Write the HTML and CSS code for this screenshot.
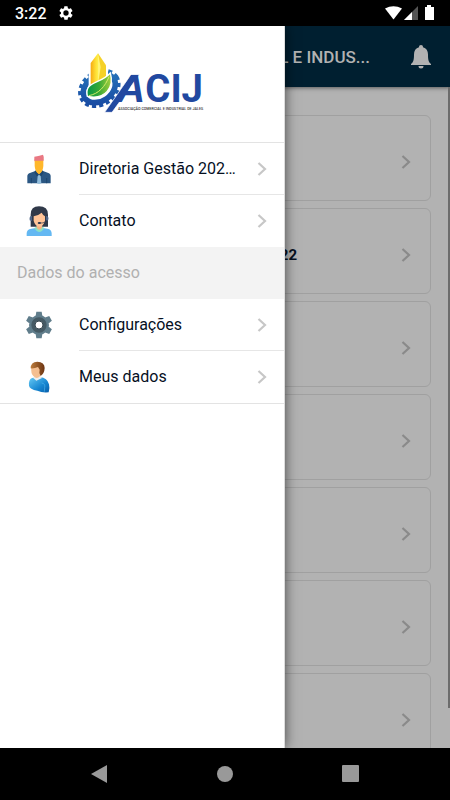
FILE: index.html
```html
<!DOCTYPE html>
<html lang="pt-BR">
<head>
<meta charset="utf-8">
<meta name="viewport" content="width=device-width, initial-scale=1">
<title>ACIJ</title>
<link rel="stylesheet" href="styles.css">
</head>
<body>
<svg width="0" height="0" class="defs" aria-hidden="true">
  <symbol id="chevron" viewBox="0 0 10 14"><path d="M1.500 1 8 7 1.500 13" fill="none" stroke="currentColor" stroke-width="2.200"/></symbol>
</svg>
<div class="status">
  <span class="clock">3:22</span>
  <svg class="status-gear" width="16" height="16" viewBox="0 0 24 24"><path fill="#fff" fill-rule="evenodd" d="M19.4 13a7 7 0 0 0 0-2l2.1-1.7a.5.5 0 0 0 .1-.6l-2-3.5a.5.5 0 0 0-.6-.2l-2.5 1a7 7 0 0 0-1.7-1l-.4-2.600a.5.5 0 0 0-.5-.4h-4a.5.5 0 0 0-.5.4L9.100 5a8 8 0 0 0-1.700 1l-2.500-1a.5.5 0 0 0-.6.2l-2 3.500a.5.5 0 0 0 .1.6L4.500 11a8 8 0 0 0 0 2l-2.100 1.700a.5.5 0 0 0-.1.600l2 3.500c.1.200.4.300.6.200l2.500-1a7 7 0 0 0 1.700 1l.4 2.600c0 .200.200.400.500.400h4c.300 0 .500-.200.500-.400l.4-2.600a7 7 0 0 0 1.700-1l2.500 1c.200.100.500 0 .600-.200l2-3.500a.5.5 0 0 0-.1-.600ZM12 8a4 4 0 1 1 0 8 4 4 0 0 1 0-8Z"/></svg>
  <svg class="signals" width="52" height="16" viewBox="0 0 52 16">
    <path d="M1 3.500Q9.500-1 18 3.500L9.500 14.500Z" fill="#fff"/>
    <path d="M34 1v14H20Z" fill="#555"/><path d="M28 7v8h-8Z" fill="#fff"/>
    <path d="M43 0h4v2h3v13h-9V2h2Z" fill="#fff"/>
  </svg>
</div>

<div class="stage">
  <div class="page">
    <header class="topbar">
      <h1>L E INDUS...</h1>
      <button class="bell" aria-label="Notificações">
        <svg width="20" height="24" viewBox="0 0 20 24"><path fill="#b2b2b2" d="M10 0c1.300 0 2 .9 2 2.200 3.300.9 5 3.500 5 7.300 0 5 .5 7.500 3 9.500v1H0v-1c2.500-2 3-4.500 3-9.500 0-3.800 1.700-6.400 5-7.300C8 .9 8.700 0 10 0ZM7.500 21h5a2.500 2.500 0 0 1-5 0Z"/></svg>
      </button>
    </header>
    <main class="cards">
      <a class="card" href="#"><svg class="chev"><use href="#chevron"/></svg></a>
      <a class="card" href="#"><b>22</b><svg class="chev"><use href="#chevron"/></svg></a>
      <a class="card" href="#"><svg class="chev"><use href="#chevron"/></svg></a>
      <a class="card" href="#"><svg class="chev"><use href="#chevron"/></svg></a>
      <a class="card" href="#"><svg class="chev"><use href="#chevron"/></svg></a>
      <a class="card" href="#"><svg class="chev"><use href="#chevron"/></svg></a>
      <a class="card" href="#"><svg class="chev"><use href="#chevron"/></svg></a>
    </main>
    <div class="scroll"></div>
  </div>

  <aside class="drawer">
    <div class="brand">
      <svg width="150" height="76" viewBox="0 0 450 228" role="img" aria-label="ACIJ">
        <defs>
          <linearGradient id="leaf" x1="0" x2="1"><stop offset="0" stop-color="#069548"/><stop offset=".5" stop-color="#39a935"/><stop offset="1" stop-color="#a4cf3d"/></linearGradient>
          <linearGradient id="tower" x1="0" x2="1"><stop offset="0" stop-color="#f6a912"/><stop offset=".6" stop-color="#fdd930"/><stop offset="1" stop-color="#fff04a"/></linearGradient>
          <linearGradient id="cog" x1="0" y1="1" x2="1" y2="0"><stop offset="0" stop-color="#1746a0"/><stop offset="1" stop-color="#2879bd"/></linearGradient>
        </defs>
        <g transform="rotate(-35 88 130)" fill="none" stroke="url(#cog)">
          <ellipse cx="88" cy="130" rx="62" ry="48" stroke-width="12" stroke-dasharray="12 9"/>
          <ellipse cx="88" cy="130" rx="52" ry="38" stroke-width="17"/>
        </g>
        <path d="M56 50 84 20l30 42v62H56Z" fill="#fff"/>
        <path d="M62 54 84 25v94H62Z" fill="url(#tower)"/>
        <path d="M84 25 108 61v55L84 124Z" fill="#f5d128"/>
        <path d="M84 25 92 66 84 118Z" fill="#fff476"/>
        <path d="M52 154C42 108 90 119 121 84c12 42-14 82-69 70Z" fill="url(#leaf)" stroke="#fff" stroke-width="4"/>
        <path d="M56 152c30-5 50-28 61-57" fill="none" stroke="#d8ec6a" stroke-width="3"/>
        <path d="M208 89h-25L104 202h22Z" fill="#2148a0" stroke="#fff" stroke-width="2"/>
        <text class="wordmark slanted" x="140" y="171">A</text>
        <text class="wordmark" x="226" y="171">CIJ</text>
        <text class="tagline" x="144" y="194">ASSOCIAÇÃO COMERCIAL E INDUSTRIAL DE JALES</text>
      </svg>
    </div>
    <nav>
      <a class="row" href="#">
        <svg class="pic" width="28" height="30" viewBox="0 0 84 90"><path d="M7 88V66q0-8 10-10l16-6h19l16 6q9 2 9 10v22Z" fill="#2b5783"/><path d="M33 42h18v12l-9 9-9-9Z" fill="#efa51e"/><path d="m32 49 10 13 10-13 4 6-8 13-6-5-6 5-8-13Z" fill="#1f4870"/><path d="m38 66 4-4 5 4 2 22-7 2-6-2Z" fill="#91bddc"/><path d="M29 14h26v22q-2 21-13 23-11-2-13-23Z" fill="#ffb72b"/><path d="M28 22V8q9-2 15-3l11-3q4 6 2 18H31Z" fill="#e97883"/><path d="M19 72v16M65 72v16" stroke="#183f65" stroke-width="2"/></svg>
        <span>Diretoria Gestão 202…</span><svg class="chev"><use href="#chevron"/></svg>
      </a>
      <a class="row end" href="#">
        <svg class="pic" width="28" height="30" viewBox="0 0 84 90"><path d="M17 62V26Q17 1 42 1q27 0 27 25v36Z" fill="#303949"/><path d="M5 90V82q0-12 14-14l17-3h14l17 3q13 2 13 14v8Z" fill="#64b8f2"/><path d="M28 66q15 24 30 0l-6-4H34Z" fill="#8ce1c3"/><path d="M35 52h16v14q-8 10-16 0Z" fill="#f6b484"/><path d="M26 31q15-3 24-11 4 8 10 11v13q-5 18-17 18-13-1-17-18Z" fill="#ffc397"/><path d="M17 30q-5 4-3 13l7 2V30ZM66 30q7 4 3 13l-6 2V30Z" fill="#4d6386"/><path d="M65 42q-4 10-21 9" fill="none" stroke="#26344b" stroke-width="2"/><ellipse cx="43" cy="51" rx="5" ry="3" fill="#26344b"/></svg>
        <span>Contato</span><svg class="chev"><use href="#chevron"/></svg>
      </a>
      <h2>Dados do acesso</h2>
      <a class="row" href="#">
        <svg class="pic" width="28" height="28" viewBox="0 0 84 84"><g fill="#607d8b"><circle cx="42" cy="42" r="30"/><path id="tooth" d="M32 15 34 2h16l2 13ZM32 69l2 13h16l2-13Z"/><use href="#tooth" transform="rotate(60 42 42)"/><use href="#tooth" transform="rotate(120 42 42)"/></g><circle cx="42" cy="42" r="17" fill="#fff" stroke="#455a64" stroke-width="12"/><circle cx="42" cy="42" r="12" fill="#fff" stroke="#37474f" stroke-width="3"/></svg>
        <span>Configurações</span><svg class="chev"><use href="#chevron"/></svg>
      </a>
      <a class="row end last" href="#">
        <svg class="pic" width="28" height="32" viewBox="0 0 84 96"><defs><linearGradient id="shirt" x1="0" x2="1" y2="1"><stop offset="0" stop-color="#68cbf5"/><stop offset=".6" stop-color="#1686d1"/><stop offset="1" stop-color="#075da9"/></linearGradient><linearGradient id="hair" x1="0" x2="1"><stop offset="0" stop-color="#bd7d3d"/><stop offset="1" stop-color="#6c3411"/></linearGradient></defs><path d="M12 74q-2-18 9-23l24-3q22 2 27 22 3 11-1 24-20 2-34-5-23-4-25-15Z" fill="url(#shirt)"/><path d="m24 50 10 9 17-8-6-8Z" fill="#eee"/><path d="M19 20q-2 16 6 25 10 12 20 1l9-18-10-15Z" fill="#f5bf91"/><path d="M17 22Q17 3 37 2q22 1 22 19-1 17-12 24l-4-9 1-10-5-8q-11 5-22 4Z" fill="url(#hair)"/><path d="M50 66q12 2 9 14l-1 12" fill="none" stroke="#4fb2ea" stroke-width="2"/></svg>
        <span>Meus dados</span><svg class="chev"><use href="#chevron"/></svg>
      </a>
    </nav>
  </aside>
</div>

<footer class="sysnav">
  <button aria-label="Voltar"><svg width="18" height="20" viewBox="0 0 18 20"><path d="M1 10 17 1v18Z"/></svg></button>
  <button aria-label="Início"><svg width="18" height="18" viewBox="0 0 18 18"><circle cx="9" cy="9" r="8"/></svg></button>
  <button aria-label="Recentes"><svg width="18" height="18" viewBox="0 0 18 18"><rect x="0" y="0" width="17" height="17" rx="1"/></svg></button>
</footer>
</body>
</html>
```
FILE: styles.css
```css
* { box-sizing: border-box; }

body {
  margin: 0;
  height: 100vh;
  display: flex;
  flex-direction: column;
  background: #000;
  color: #06101f;
  font-family: Roboto, "Liberation Sans", sans-serif;
  overflow: hidden;
}

a { color: inherit; text-decoration: none; }
button { border: 0; padding: 0; background: none; }
svg { display: block; flex: none; }
.defs { position: absolute; }

.status {
  display: flex;
  align-items: center;
  height: 26px;
  padding: 0 14px 0 15px;
  flex: none;
  color: #fff;
}
.clock { font-size: 16px; font-weight: 500; line-height: 26px; padding-top: 2px; }
.status-gear { margin-left: 11px; }
.signals { margin-left: auto; }

.stage {
  position: relative;
  flex: 1;
  min-height: 0;
  overflow: hidden;
}

.page { height: 100%; background: #b2b2b2; }

.topbar {
  position: relative;
  display: flex;
  align-items: center;
  justify-content: flex-end;
  gap: 41px;
  height: 61px;
  padding-right: 19px;
  background: #001f30;
  box-shadow: 0 1px 4px rgba(0, 0, 0, .5);
  color: #b2b2b2;
}
.topbar h1 { margin: 0; font-size: 17px; font-weight: 500; }

.cards {
  display: flex;
  flex-direction: column;
  gap: 7px;
  padding: 28px 19px 0;
}
.card {
  display: flex;
  align-items: center;
  justify-content: flex-end;
  gap: 104px;
  height: 86px;
  padding: 8px 19px 0 0;
  flex: none;
  border: 1px solid #a0a0a0;
  border-radius: 6px;
}
.card b { font-size: 15px; }
.card .chev { color: #8a8a8a; }

.chev { width: 10px; height: 14px; color: #c7c7c7; }

.scroll {
  position: absolute;
  top: 61px;
  right: 0;
  width: 2px;
  height: 86%;
  background: #6c6c6c;
}

.drawer {
  position: absolute;
  inset: 0 auto 0 0;
  width: 63.3%;
  background: #fff;
  border-right: 1px solid #ddd;
  box-shadow: 0 0 12px rgba(0, 0, 0, .6);
}
.brand {
  display: flex;
  justify-content: center;
  height: 117px;
  padding: 19px 0 0 6px;
  border-bottom: 1px solid #e3e3e3;
}
.wordmark { font: bold 115px Roboto, sans-serif; fill: #2148a0; }
.slanted { font: italic bold 118px "Liberation Sans", sans-serif; }
.tagline { font: 500 11px Roboto, sans-serif; fill: #333; }

.row {
  display: flex;
  align-items: center;
  height: 52px;
  padding-left: 25px;
  font-size: 16px;
}
.pic { margin-right: 26px; }
.row span {
  flex: 1;
  min-width: 0;
  height: 52px;
  padding-right: 12px;
  line-height: 52px;
  border-bottom: 1px solid #e6e6e6;
  overflow: hidden;
  white-space: nowrap;
  text-overflow: ellipsis;
}
.row .chev {
  width: 27px;
  height: 52px;
  padding: 19px 17px 18px 0;
  border-bottom: 1px solid #e6e6e6;
}
.row.last { border-bottom: 1px solid #e3e3e3; height: 53px; }
.row.end span, .row.end .chev { border-bottom-color: transparent; }

h2 {
  margin: 0;
  padding-left: 17px;
  background: #f3f3f3;
  color: #b0b0b0;
  font-size: 16px;
  font-weight: 400;
  line-height: 52px;
}

.sysnav {
  display: flex;
  align-items: center;
  justify-content: space-between;
  height: 52px;
  padding: 0 20%;
  flex: none;
}
.sysnav svg { fill: #999; }
```
